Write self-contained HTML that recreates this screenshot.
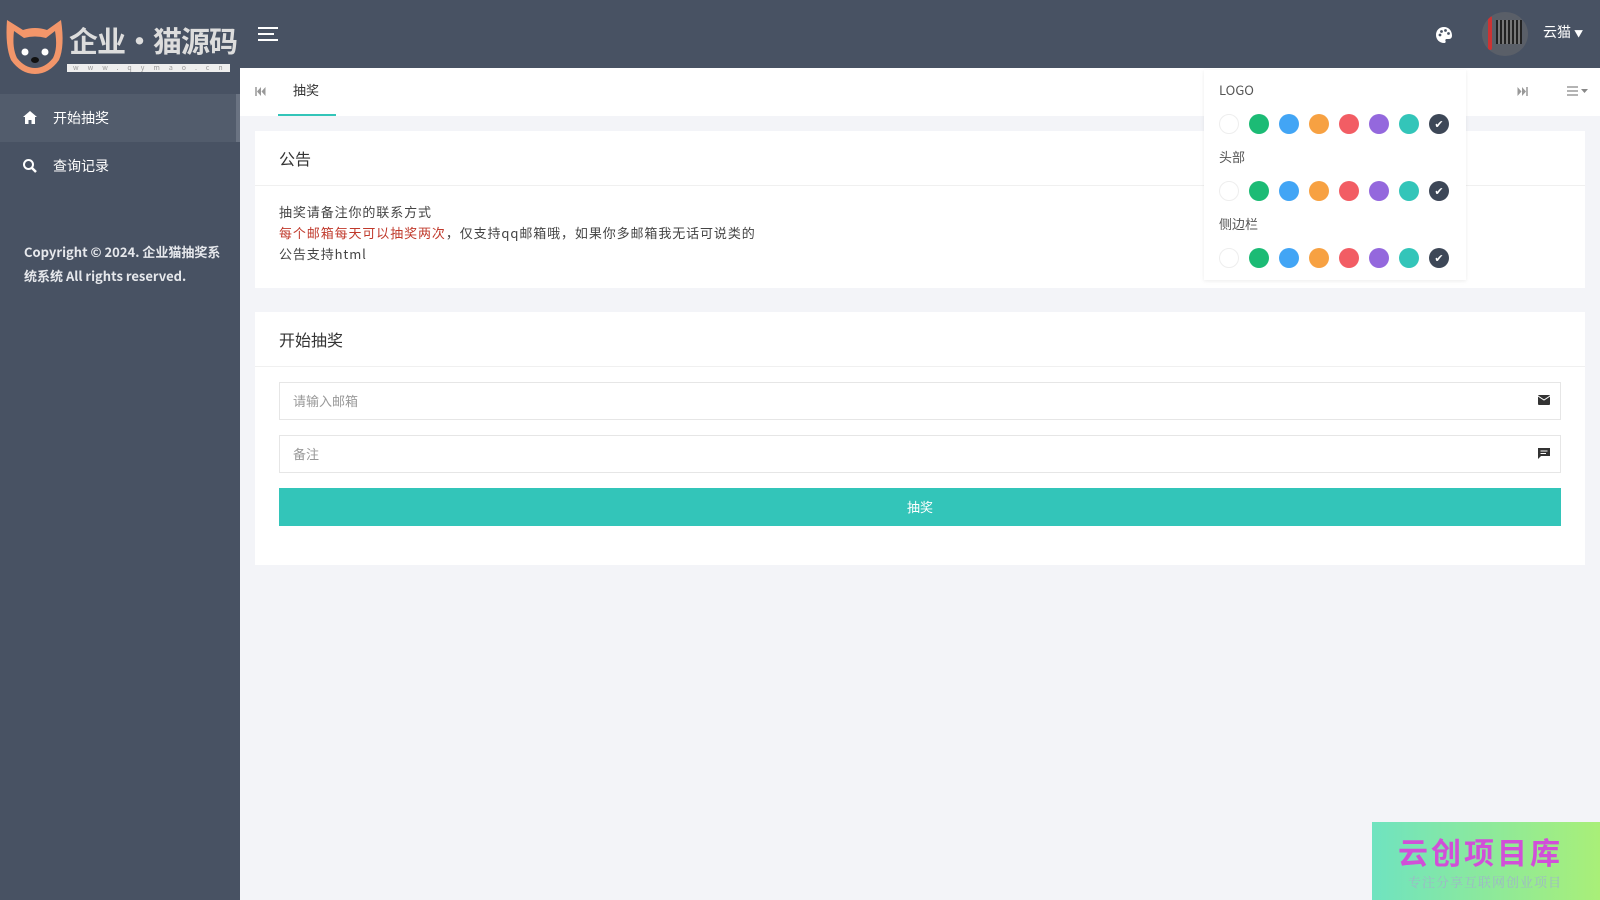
<!DOCTYPE html>
<html><head><meta charset="utf-8"><style>
*{box-sizing:border-box;margin:0;padding:0}
body{width:1600px;height:900px;background:#f3f4f8;font-family:"Noto Sans CJK SC","Liberation Sans",sans-serif;position:relative;overflow:hidden;color:#333}
.side{position:absolute;left:0;top:0;width:240px;height:900px;background:#485263}
.logo{height:94px;position:relative}
.menu div{height:48px;line-height:48px;padding-left:53px;color:#fff;font-size:14px;position:relative}
.menu .act{background:#525c6c;border-right:4px solid #6a7382}
.menu svg{position:absolute;left:23px;top:17px}
.copy{position:absolute;left:24px;top:240px;color:#e6e8ec;font-size:13px;line-height:24px;font-weight:bold;width:200px}
.head{position:absolute;left:240px;top:0;right:0;height:68px;background:#485263}
.tabs{position:absolute;left:240px;top:68px;right:0;height:48px;background:#fff}
.card{position:absolute;left:255px;width:1330px;background:#fff}
.ct{height:55px;line-height:55px;padding-left:24px;font-size:16px;border-bottom:1px solid #f0f0f0}
.inp{position:absolute;left:24px;width:1282px;height:38px;border:1px solid #e6e6e6;font-size:13px;color:#999;line-height:36px;padding-left:13px}
.dd{position:absolute;left:1204px;top:70px;width:262px;height:210px;background:#fff;box-shadow:0 1px 4px rgba(0,0,0,.08)}
.dd .l{position:absolute;left:15px;font-size:13px;color:#555}
.row{position:absolute;left:15px;display:flex;gap:10px}
.row span{width:20px;height:20px;border-radius:50%;display:block;position:relative}
</style></head><body>
<div class="side">
 <div class="logo">
  <svg width="64" height="60" style="position:absolute;left:3px;top:16px" viewBox="0 0 64 60"><path d="M4 4 L20 14 Q32 10 44 14 L58 4 Q62 30 56 44 Q46 58 32 58 Q18 58 8 44 Q2 30 4 4Z" fill="#f3966a"/><path d="M11 15 L21 22 Q32 19 43 22 L52 15 Q55 32 50 42 Q42 52 32 52 Q22 52 14 42 Q9 32 11 15Z" fill="#485263"/><circle cx="22" cy="36" r="3.5" fill="#fff"/><circle cx="42" cy="36" r="3.5" fill="#fff"/><ellipse cx="32" cy="44" rx="4" ry="3" fill="#111"/></svg>
  <div style="position:absolute;left:69px;top:21px;color:#ddd;font-size:29px;font-weight:bold;white-space:nowrap;line-height:38px;letter-spacing:-1px">企业·猫源码</div>
  <div style="position:absolute;left:67px;top:64px;width:163px;height:8px;background:#eee;font-size:7px;line-height:8px;color:#999;letter-spacing:9px;padding-left:6px;white-space:nowrap;overflow:hidden">www.qymao.cn</div>
 </div>
 <div class="menu">
  <div class="act"><svg width="14" height="13" viewBox="0 0 14 13"><path d="M7 0 L14 6 H12 V13 H8.5 V9 H5.5 V13 H2 V6 H0Z" fill="#fff"/></svg>开始抽奖</div>
  <div><svg width="14" height="14" viewBox="0 0 14 14"><circle cx="5.5" cy="5.5" r="4.5" fill="none" stroke="#fff" stroke-width="2"/><path d="M9 9 L13 13" stroke="#fff" stroke-width="2.5"/></svg>查询记录</div>
 </div>
 <div class="copy">Copyright © 2024. 企业猫抽奖系统系统 All rights reserved.</div>
</div>
<div class="head">
 <svg width="20" height="16" style="position:absolute;left:18px;top:26px"><path d="M0 2H20M0 8H16M0 14H20" stroke="#fff" stroke-width="2"/></svg>
 <svg width="18" height="18" viewBox="0 0 18 18" style="position:absolute;left:1195px;top:26px"><path d="M9 1 C4 1 1 4.5 1 9 C1 13.5 4.5 17 9 17 C10.5 17 11 16 10.5 15 C10 14 10.5 13 12 13 H14 C16 13 17 11.5 17 9.5 C17 4.5 13.5 1 9 1Z" fill="#fff"/><circle cx="5" cy="9" r="1.4" fill="#485263"/><circle cx="6.5" cy="5.5" r="1.4" fill="#485263"/><circle cx="10.5" cy="4.5" r="1.4" fill="#485263"/><circle cx="13.5" cy="7.5" r="1.4" fill="#485263"/></svg>
 <div style="position:absolute;left:1242px;top:12px;width:46px;height:44px;border-radius:50%;background:#5a5f68;overflow:hidden"><div style="position:absolute;left:6px;top:4px;width:4px;height:34px;background:#c33;border-radius:2px"></div><div style="position:absolute;left:14px;top:8px;width:26px;height:24px;background:repeating-linear-gradient(90deg,#222 0 2px,#777 2px 4px)"></div></div>
 <div style="position:absolute;left:1303px;top:22px;color:#fff;font-size:14px">云猫 <span style="font-size:9px">▼</span></div>
</div>
<div class="tabs">
 <svg width="11" height="9" style="position:absolute;left:15px;top:19px"><path d="M1 0V9" stroke="#999" stroke-width="1.5"/><path d="M6 0L2 4.5L6 9ZM10.5 0L6.5 4.5L10.5 9Z" fill="#999"/></svg>
 <div style="position:absolute;left:53px;top:12px;font-size:13px;color:#333">抽奖</div>
 <div style="position:absolute;left:38px;top:46px;width:58px;height:2px;background:#33c5b9"></div>
 <svg width="11" height="9" style="position:absolute;left:1277px;top:19px"><path d="M10 0V9" stroke="#999" stroke-width="1.5"/><path d="M5 0L9 4.5L5 9ZM0.5 0L4.5 4.5L0.5 9Z" fill="#999"/></svg>
 <svg width="22" height="10" style="position:absolute;left:1327px;top:18px"><path d="M0 1H11M0 5H11M0 9H11" stroke="#888" stroke-width="1.3"/><path d="M14 3H21L17.5 7Z" fill="#888"/></svg>
</div>
<div class="card" style="top:131px;height:157px">
 <div class="ct">公告</div>
 <div style="padding:15px 24px;font-size:13px;line-height:21px;color:#444;letter-spacing:0.9px">抽奖请备注你的联系方式<br><span style="color:#c0392b">每个邮箱每天可以抽奖两次</span>，仅支持qq邮箱哦，如果你多邮箱我无话可说类的<br>公告支持html</div>
</div>
<div class="card" style="top:312px;height:253px">
 <div class="ct">开始抽奖</div>
 <div class="inp" style="top:70px">请输入邮箱<svg width="12" height="10" style="position:absolute;right:10px;top:12px"><rect width="12" height="10" rx="1" fill="#333"/><path d="M0 1 L6 5 L12 1" stroke="#fff" fill="none"/></svg></div>
 <div class="inp" style="top:123px">备注<svg width="12" height="11" style="position:absolute;right:10px;top:12px"><path d="M0 0H12V8H3L0 11Z" fill="#333"/><path d="M2.5 3H9.5M2.5 5.5H8" stroke="#fff"/></svg></div>
 <div style="position:absolute;left:24px;top:176px;width:1282px;height:38px;background:#33c5b9;color:#fff;font-size:13px;text-align:center;line-height:38px">抽奖</div>
</div>
<div class="dd">
 <div class="l" style="top:10px">LOGO</div>
 <div class="row" style="top:44px"><span style="border:1px solid #eee"></span><span style="background:#1cbb75"></span><span style="background:#42a5f5"></span><span style="background:#f7a142"></span><span style="background:#f25d64"></span><span style="background:#9468dd"></span><span style="background:#33c5b9"></span><span style="background:#3d4757;color:#fff;font-size:11px;text-align:center;line-height:20px">✔</span></div>
 <div class="l" style="top:77px">头部</div>
 <div class="row" style="top:111px"><span style="border:1px solid #eee"></span><span style="background:#1cbb75"></span><span style="background:#42a5f5"></span><span style="background:#f7a142"></span><span style="background:#f25d64"></span><span style="background:#9468dd"></span><span style="background:#33c5b9"></span><span style="background:#3d4757;color:#fff;font-size:11px;text-align:center;line-height:20px">✔</span></div>
 <div class="l" style="top:144px">侧边栏</div>
 <div class="row" style="top:178px"><span style="border:1px solid #eee"></span><span style="background:#1cbb75"></span><span style="background:#42a5f5"></span><span style="background:#f7a142"></span><span style="background:#f25d64"></span><span style="background:#9468dd"></span><span style="background:#33c5b9"></span><span style="background:#3d4757;color:#fff;font-size:11px;text-align:center;line-height:20px">✔</span></div>
</div>
<div style="position:absolute;left:1372px;top:822px;width:228px;height:78px;background:linear-gradient(90deg,#6fe3c0,#a9ef78)">
 <div style="position:absolute;left:26px;top:10px;font-size:30px;font-weight:bold;color:#d14fd8;letter-spacing:3px;line-height:38px;white-space:nowrap">云创项目库</div>
 <div style="position:absolute;left:36px;top:50px;font-size:13px;color:#9fb6c8;font-family:'Noto Serif CJK SC',serif;letter-spacing:1px;white-space:nowrap">专注分享互联网创业项目</div>
</div>
</body></html>
